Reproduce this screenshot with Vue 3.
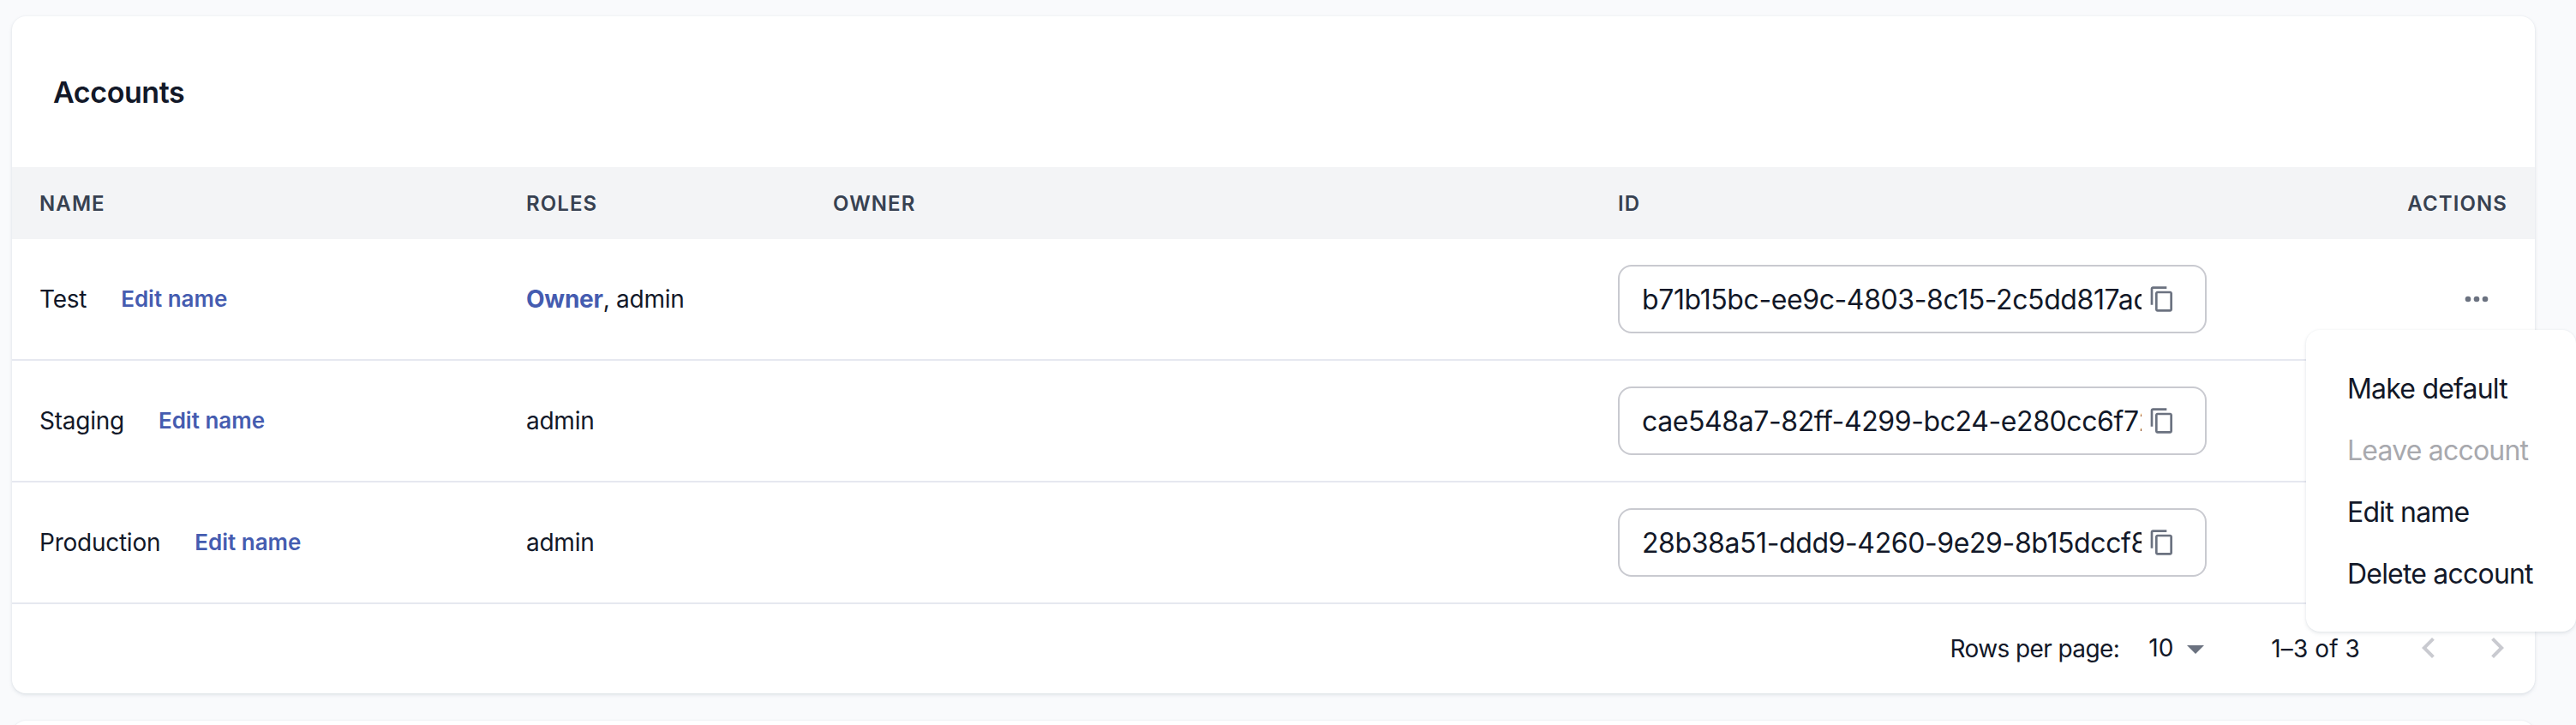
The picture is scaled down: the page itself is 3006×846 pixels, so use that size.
<script setup>
const accounts = [
  { name: 'Test', owner: true, id: 'b71b15bc-ee9c-4803-8c15-2c5dd817ad42' },
  { name: 'Staging', owner: false, id: 'cae548a7-82ff-4299-bc24-e280cc6f7241' },
  { name: 'Production', owner: false, id: '28b38a51-ddd9-4260-9e29-8b15dccf8a07' },
]
const actions = [
  { label: 'Make default' },
  { label: 'Leave account', disabled: true },
  { label: 'Edit name' },
  { label: 'Delete account' },
]
</script>

<template>
  <main class="page">
    <section class="card">
      <h2 class="title">Accounts</h2>
      <div class="row head">
        <span>Name</span>
        <span>Roles</span>
        <span>Owner</span>
        <span>ID</span>
        <span class="right">Actions</span>
      </div>
      <div v-for="(account, i) in accounts" :key="account.name" class="row item">
        <div class="name">
          <span>{{ account.name }}</span>
          <a class="edit">Edit name</a>
        </div>
        <div><template v-if="account.owner"><b class="owner">Owner</b>, </template>admin</div>
        <div></div>
        <div>
          <div class="field">
            <span class="value">{{ account.id }}</span>
            <svg class="copy" viewBox="0 0 24 24">
              <path d="M16 1H4c-1.100 0-2 .9-2 2v14h2V3h12V1zm3 4H8c-1.100 0-2 .9-2 2v14c0 1.100.9 2 2 2h11c1.100 0 2-.9 2-2V7c0-1.100-.9-2-2-2zm0 16H8V7h11v14z" />
            </svg>
          </div>
        </div>
        <div class="right">
          <svg v-if="i === 0" class="more" viewBox="0 0 24 24">
            <circle cx="6" cy="12" r="2" />
            <circle cx="12" cy="12" r="2" />
            <circle cx="18" cy="12" r="2" />
          </svg>
        </div>
      </div>
      <footer class="pager">
        <span class="label">Rows per page:</span>
        <span class="count">10</span>
        <svg class="caret" viewBox="0 0 24 24"><path d="M7 10l5 5 5-5z" /></svg>
        <span class="range">1–3 of 3</span>
        <svg class="arrow" viewBox="0 0 24 24"><path d="M15.410 16.590 10.830 12l4.580-4.590L14 6l-6 6 6 6z" /></svg>
        <svg class="arrow" viewBox="0 0 24 24"><path d="M8.590 16.590 13.170 12 8.590 7.410 10 6l6 6-6 6z" /></svg>
      </footer>
    </section>
    <section class="card next"></section>
    <ul class="menu">
      <li v-for="a in actions" :key="a.label" :class="{ disabled: a.disabled }">{{ a.label }}</li>
    </ul>
  </main>
</template>

<style>
body {
  margin: 0;
  background: #f9fafc;
}
</style>

<style scoped>
.page {
  position: relative;
  box-sizing: border-box;
  width: 3006px;
  height: 846px;
  padding: 19px 48px 0 14px;
  overflow: hidden;
  background: #f9fafc;
  color: #121828;
  font-family: Inter, "Liberation Sans", sans-serif;
  font-size: 28px;
  line-height: 44px;
}
.card {
  height: 790px;
  border-radius: 16px;
  background: #fff;
  box-shadow: 0 2px 4px rgba(100, 116, 139, 0.16), 0 0 2px rgba(100, 116, 139, 0.1);
}
.next {
  margin-top: 32px;
}
.title {
  box-sizing: border-box;
  height: 176px;
  margin: 0;
  padding: 69px 48px 0;
  font-size: 34px;
  font-weight: 600;
  line-height: 40px;
  letter-spacing: -0.4px;
}
.row {
  display: grid;
  grid-template-columns: 568px 358px 916px 1fr 240px;
  align-items: center;
  padding: 0 32px;
}
.head {
  box-sizing: border-box;
  height: 84px;
  padding-top: 2px;
  background: #f3f4f6;
  color: #374151;
  font-size: 24px;
  font-weight: 600;
  letter-spacing: 1.1px;
  text-transform: uppercase;
}
.item {
  box-sizing: border-box;
  height: 142px;
  border-bottom: 2px solid #e6e8f0;
  letter-spacing: -0.25px;
}
.name {
  display: flex;
  align-items: center;
  gap: 40px;
}
.edit {
  color: #455cb0;
  font-size: 26px;
  font-weight: 600;
  letter-spacing: 0;
}
.owner {
  color: #455cb0;
  font-weight: 700;
}
.field {
  display: flex;
  align-items: center;
  box-sizing: border-box;
  width: 687px;
  height: 80px;
  padding: 0 26px;
  border: 2px solid #c9cad0;
  border-radius: 16px;
  font-size: 32px;
  letter-spacing: -0.4px;
}
.value {
  width: 583px;
  padding-top: 2px;
  overflow: hidden;
  white-space: nowrap;
}
.copy {
  width: 32px;
  height: 32px;
  margin-left: 8px;
  fill: #6b7280;
}
.right {
  display: flex;
  justify-content: flex-end;
}
.more {
  width: 40px;
  height: 40px;
  margin-right: 16px;
  fill: #6b7280;
}
.pager {
  display: flex;
  align-items: center;
  justify-content: flex-end;
  height: 104px;
  padding-right: 4px;
}
.label {
  letter-spacing: -0.6px;
}
.count {
  margin: 0 2px 2px 34px;
}
.caret {
  width: 48px;
  height: 48px;
  fill: #6b7280;
}
.range {
  margin: 0 40px 0 64px;
  letter-spacing: 0.1px;
}
.arrow {
  width: 48px;
  height: 48px;
  margin-bottom: 2px;
  padding: 16px;
  fill: #c9cad0;
}
.menu {
  position: absolute;
  top: 385px;
  left: 2691px;
  box-sizing: border-box;
  width: 315px;
  height: 352px;
  margin: 0;
  padding: 33px 0 31px;
  border-radius: 16px;
  background: #fff;
  box-shadow: 0 2px 4px rgba(100, 116, 139, 0.16), 0 0 2px rgba(100, 116, 139, 0.1);
  font-size: 32px;
  letter-spacing: -0.8px;
  list-style: none;
}
.menu li {
  padding: 0 48px;
  line-height: 72px;
  white-space: nowrap;
}
.menu .disabled {
  color: #a8a9ae;
}
</style>
